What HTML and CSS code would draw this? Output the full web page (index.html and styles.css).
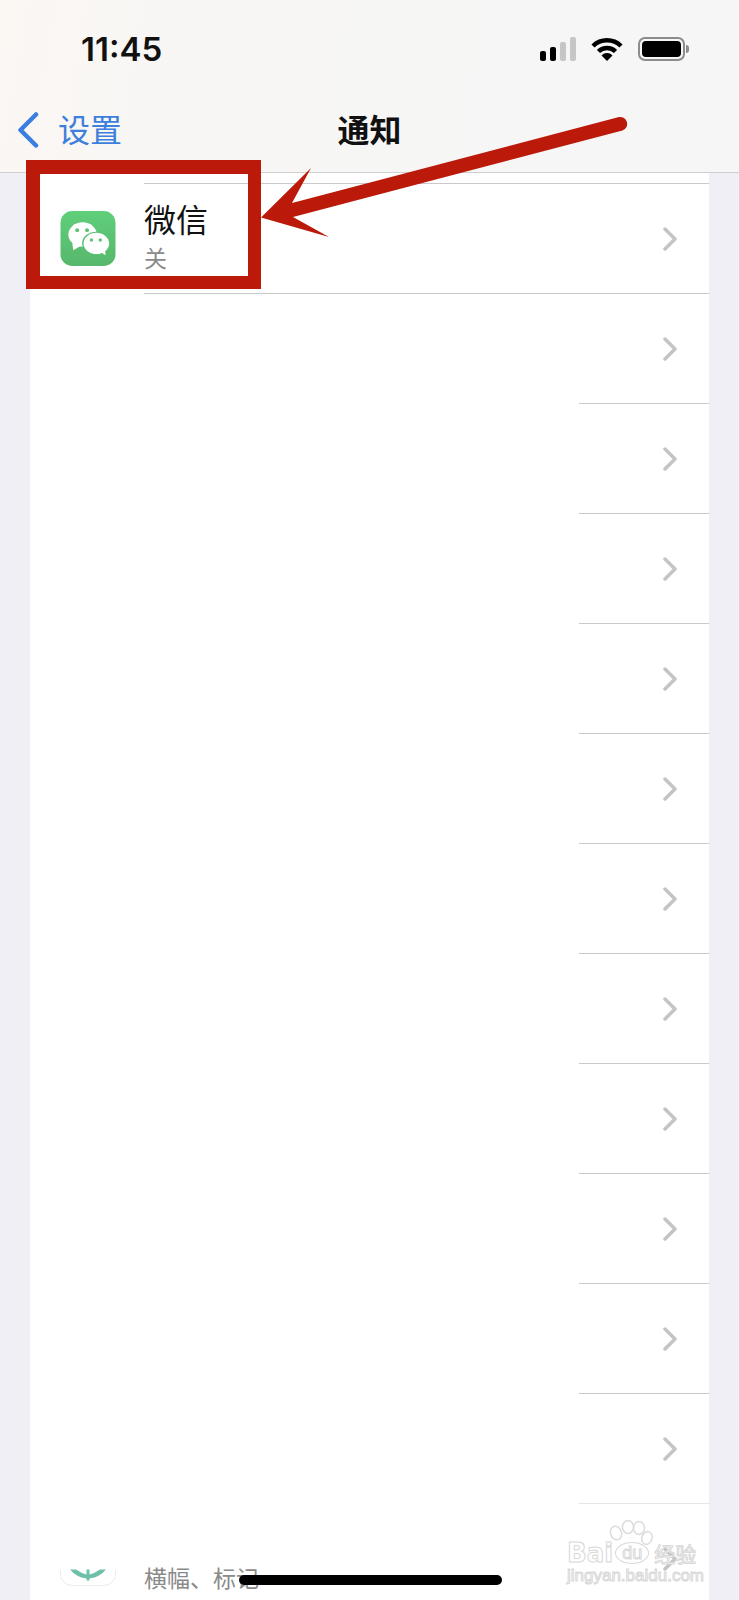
FILE: index.html
```html
<!DOCTYPE html>
<html lang="zh">

<head>
    <meta charset="utf-8">
    <meta name="viewport" content="width=device-width, initial-scale=1.0">
    <title>通知</title>
    <link rel="stylesheet" href="styles.css">
</head>

<body>
    <div class="page">
        <header class="top">
            <div class="status">
                <span class="time">11:45</span>
                <div class="status_icons">
                    <div class="signal">
                        <i class="bar b1"></i>
                        <i class="bar b2"></i>
                        <i class="bar b3 off"></i>
                        <i class="bar b4 off"></i>
                    </div>
                    <svg class="wifi" width="32" height="24" viewBox="0 0 32 24">
                        <path d="M2 9 A20 20 0 0 1 30 9" fill="none" stroke="#000" stroke-width="4.500"/>
                        <path d="M7.500 14.500 A12 12 0 0 1 24.500 14.500" fill="none" stroke="#000" stroke-width="4.500"/>
                        <path d="M10.500 18.500 A7.500 7.500 0 0 1 21.500 18.500 L16 24 Z" fill="#000"/>
                    </svg>
                    <div class="battery"><i class="battery_fill"></i></div>
                    <i class="battery_cap"></i>
                </div>
            </div>
            <nav class="nav">
                <div class="back">
                    <svg class="back_icon" width="22" height="36" viewBox="0 0 22 36">
                        <path d="M19 2.500 L3.500 18 L19 33.500" fill="none" stroke="#3a7ee0" stroke-width="4.500" stroke-linecap="round" stroke-linejoin="round"/>
                    </svg>
                    <span class="back_text">设置</span>
                </div>
                <h1 class="title">通知</h1>
            </nav>
        </header>

        <ul class="list">
            <li class="row">
                <svg class="app_icon" width="56" height="55" viewBox="0 0 56 56">
                    <defs>
                        <linearGradient id="wx" x1="0" y1="0" x2="0" y2="1">
                            <stop offset="0" stop-color="#5fcf7a"/>
                            <stop offset="1" stop-color="#57b76c"/>
                        </linearGradient>
                    </defs>
                    <rect width="56" height="56" rx="12" fill="url(#wx)"/>
                    <ellipse cx="22.500" cy="24" rx="14.500" ry="12.500" fill="#fff"/>
                    <path d="M12 33 L13 40 L20 36 Z" fill="#fff"/>
                    <ellipse cx="36.500" cy="33" rx="14.500" ry="12" fill="#5ac273"/>
                    <ellipse cx="36.500" cy="33" rx="13" ry="10.800" fill="#fff"/>
                    <path d="M41 42 L46 45 L45 38 Z" fill="#fff"/>
                    <circle cx="17" cy="19.500" r="2" fill="#5ac273"/>
                    <circle cx="27" cy="19.500" r="2" fill="#5ac273"/>
                    <circle cx="31.500" cy="29.500" r="1.700" fill="#5ac273"/>
                    <circle cx="40.500" cy="29.500" r="1.700" fill="#5ac273"/>
                </svg>
                <div class="row_body">
                    <div class="row_text">
                        <div class="app_name">微信</div>
                        <div class="app_sub">关</div>
                    </div>
                    <svg class="chev" width="14" height="24" viewBox="0 0 14 24"><path d="M2 2 L12 12 L2 22" /></svg>
                </div>
            </li>
            <li class="row">
                <div class="row_body long">
                    <svg class="chev" width="14" height="24" viewBox="0 0 14 24"><path d="M2 2 L12 12 L2 22" /></svg>
                </div>
            </li>
            <li class="row"><div class="row_body short"><svg class="chev" width="14" height="24" viewBox="0 0 14 24"><path d="M2 2 L12 12 L2 22" /></svg></div></li>
            <li class="row"><div class="row_body short"><svg class="chev" width="14" height="24" viewBox="0 0 14 24"><path d="M2 2 L12 12 L2 22" /></svg></div></li>
            <li class="row"><div class="row_body short"><svg class="chev" width="14" height="24" viewBox="0 0 14 24"><path d="M2 2 L12 12 L2 22" /></svg></div></li>
            <li class="row"><div class="row_body short"><svg class="chev" width="14" height="24" viewBox="0 0 14 24"><path d="M2 2 L12 12 L2 22" /></svg></div></li>
            <li class="row"><div class="row_body short"><svg class="chev" width="14" height="24" viewBox="0 0 14 24"><path d="M2 2 L12 12 L2 22" /></svg></div></li>
            <li class="row"><div class="row_body short"><svg class="chev" width="14" height="24" viewBox="0 0 14 24"><path d="M2 2 L12 12 L2 22" /></svg></div></li>
            <li class="row"><div class="row_body short"><svg class="chev" width="14" height="24" viewBox="0 0 14 24"><path d="M2 2 L12 12 L2 22" /></svg></div></li>
            <li class="row"><div class="row_body short"><svg class="chev" width="14" height="24" viewBox="0 0 14 24"><path d="M2 2 L12 12 L2 22" /></svg></div></li>
            <li class="row"><div class="row_body short"><svg class="chev" width="14" height="24" viewBox="0 0 14 24"><path d="M2 2 L12 12 L2 22" /></svg></div></li>
            <li class="row"><div class="row_body short"><svg class="chev" width="14" height="24" viewBox="0 0 14 24"><path d="M2 2 L12 12 L2 22" /></svg></div></li>
            <li class="row">
                <svg class="app_icon" width="56" height="56" viewBox="0 0 56 56">
                    <path d="M0.500 39 V44 A11.500 11.500 0 0 0 12 54.500 H44 A11.500 11.500 0 0 0 55.500 44 V39" fill="#fff" stroke="#ececec"/>
                    <path d="M10 38.500 H16 Q21 42 26.500 43.500 V38.500 H29.500 V43.500 Q35 42 40 38.500 H46 Q40 46 29.500 47.500 V49.500 H26.500 V47.500 Q16 46 10 38.500 Z" fill="#6fc0a8"/>
                </svg>
                <div class="row_body faint">
                    <div class="row_text low">
                        <div class="app_sub">横幅、标记</div>
                    </div>
                    <svg class="chev" width="14" height="24" viewBox="0 0 14 24"><path d="M2 2 L12 12 L2 22" /></svg>
                </div>
            </li>
        </ul>

        <!-- red annotation on top of the screenshot -->
        <div class="mark_box"></div>
        <svg class="mark_arrow" width="739" height="300" viewBox="0 0 739 300">
            <path d="M261 217.500 L311 168 L292 203 L619 117 A7 7 0 0 1 622.500 130.500 L293 217 L329 237 Z" fill="#bb1a0b"/>
        </svg>

        <div class="watermark">
            <svg class="paw" width="134" height="40" viewBox="0 0 134 40">
                <g fill="none" stroke="#dcdcdc" stroke-width="1.500">
                    <ellipse cx="50" cy="13" rx="5.500" ry="7" transform="rotate(-20 50 13)"/>
                    <ellipse cx="62" cy="7" rx="5.500" ry="6.500"/>
                    <ellipse cx="73" cy="8" rx="5.500" ry="6.500"/>
                    <ellipse cx="81" cy="18" rx="5" ry="6.500" transform="rotate(20 81 18)"/>
                </g>
            </svg>
            <div class="wm_main">
                <span class="wm_bai">Bai</span>
                <span class="wm_du">du</span>
                <span class="wm_jy">经验</span>
            </div>
            <div class="wm_url">jingyan.baidu.com</div>
        </div>

        <div class="home_bar"></div>
    </div>
</body></html>
```

FILE: styles.css
```css
* {
    box-sizing: border-box;
}

body {
    margin: 0;
    font-family: "Noto Sans CJK SC", sans-serif;
}

.page {
    position: relative;
    width: 739px;
    height: 1600px;
    overflow: hidden;
    background-color: #efeff5;
}

.top {
    height: 173px;
    background: linear-gradient(100deg, #fbf7f3 0%, #f7f6f5 30%, #f6f6f6 100%);
    border-bottom: 1px solid #cfcfcf;
}

.status {
    display: flex;
    justify-content: space-between;
    align-items: center;
    height: 98px;
    padding-left: 81px;
    padding-right: 50px;
}

.time {
    font-family: Inter, sans-serif;
    font-size: 33px;
    font-weight: 600;
    color: #111;
}

.status_icons {
    display: flex;
    align-items: center;
}

.signal {
    display: flex;
    align-items: flex-end;
    gap: 3.5px;
    height: 24px;
}

.bar {
    width: 6.5px;
    border-radius: 2px;
    background-color: #000;
}

.bar.off {
    background-color: #c6c6c6;
}

.b1 {
    height: 10px;
}

.b2 {
    height: 14px;
}

.b3 {
    height: 19px;
}

.b4 {
    height: 24px;
}

.wifi {
    margin-left: 15px;
}

.battery {
    width: 47px;
    height: 24px;
    margin-left: 15px;
    padding: 2px;
    border: 2px solid #8c8c8c;
    border-radius: 7px;
}

.battery_fill {
    display: block;
    height: 100%;
    border-radius: 4px;
    background-color: #000;
}

.battery_cap {
    width: 3px;
    height: 8px;
    margin-left: 1px;
    border-radius: 0 3px 3px 0;
    background-color: #8c8c8c;
}

.nav {
    position: relative;
    display: flex;
    align-items: center;
    justify-content: center;
    height: 60px;
}

.back {
    position: absolute;
    left: 17px;
    top: 0;
    display: flex;
    align-items: center;
    gap: 19px;
    height: 60px;
}

.back_icon {
    margin-top: 4px;
}

.back_text {
    font-size: 32px;
    color: #3d7fdc;
}

.title {
    margin: 0;
    font-size: 32px;
    font-weight: 700;
    color: #111;
}

.list {
    margin: 0 30px;
    padding: 10px 0 0;
    list-style: none;
    background-color: #fff;
}

.row {
    display: flex;
    height: 110px;
}

.app_icon {
    flex-shrink: 0;
    margin: 28px 0 0 30px;
}

.row_body {
    display: flex;
    flex-grow: 1;
    align-items: center;
    justify-content: space-between;
    margin-left: 28px;
    padding-right: 32px;
    border-top: 1px solid #c9c9c9;
}

.row_body.long {
    justify-content: flex-end;
    margin-left: 114px;
}

.row_body.short {
    justify-content: flex-end;
    margin-left: 549px;
}

.row_body.faint {
    position: relative;
    border-top: 1px solid transparent;
}

/* the last separator is paler and starts further right */
.row_body.faint::before {
    content: "";
    position: absolute;
    top: -1px;
    right: 0;
    width: 130px;
    height: 1px;
    background-color: #e6e6e6;
}

.row_text {
    display: flex;
    flex-direction: column;
    padding-bottom: 5px;
}

.row_text.low {
    align-self: flex-start;
    padding-top: 58px;
    padding-bottom: 0;
}

.app_name {
    margin-bottom: 7px;
    font-size: 32px;
    line-height: 34px;
    color: #111;
}

.app_sub {
    font-size: 23px;
    line-height: 30px;
    color: #8a8a8a;
}

.chev path {
    fill: none;
    stroke: #c4c4c4;
    stroke-width: 3.500;
    stroke-linecap: round;
    stroke-linejoin: round;
}

.mark_box {
    position: absolute;
    left: 26px;
    top: 160px;
    width: 235px;
    height: 129px;
    border: solid #bb1a0b;
    border-width: 14px 13px 13px 14px;
}

.mark_arrow {
    position: absolute;
    left: 0;
    top: 0;
}

.watermark {
    position: absolute;
    left: 566px;
    top: 1520px;
    width: 134px;
    height: 66px;
    font-family: "DejaVu Sans", "Noto Sans CJK SC", sans-serif;
    color: #fff;
    -webkit-text-stroke: 1px #d8d8d8;
}

.paw {
    position: absolute;
    left: 0;
    top: 0;
}

.wm_main {
    position: absolute;
    left: 1px;
    top: 20px;
    display: flex;
    align-items: center;
    height: 26px;
    font-size: 26px;
    font-weight: 700;
}

.wm_du {
    width: 34px;
    margin-left: 2px;
    font-family: "Liberation Sans", sans-serif;
    font-size: 18px;
    font-weight: 400;
    line-height: 20px;
    text-align: center;
    border: 1px solid #d8d8d8;
    border-radius: 50%;
}

.wm_jy {
    margin-left: 5px;
    font-size: 21px;
    font-weight: 400;
}

.wm_url {
    position: absolute;
    left: 1px;
    top: 46px;
    font-family: "Liberation Sans", sans-serif;
    font-size: 17px;
    font-weight: 400;
    white-space: nowrap;
}

.home_bar {
    position: absolute;
    left: 239px;
    top: 1575px;
    width: 263px;
    height: 10px;
    border-radius: 5px;
    background-color: #000;
}
```
